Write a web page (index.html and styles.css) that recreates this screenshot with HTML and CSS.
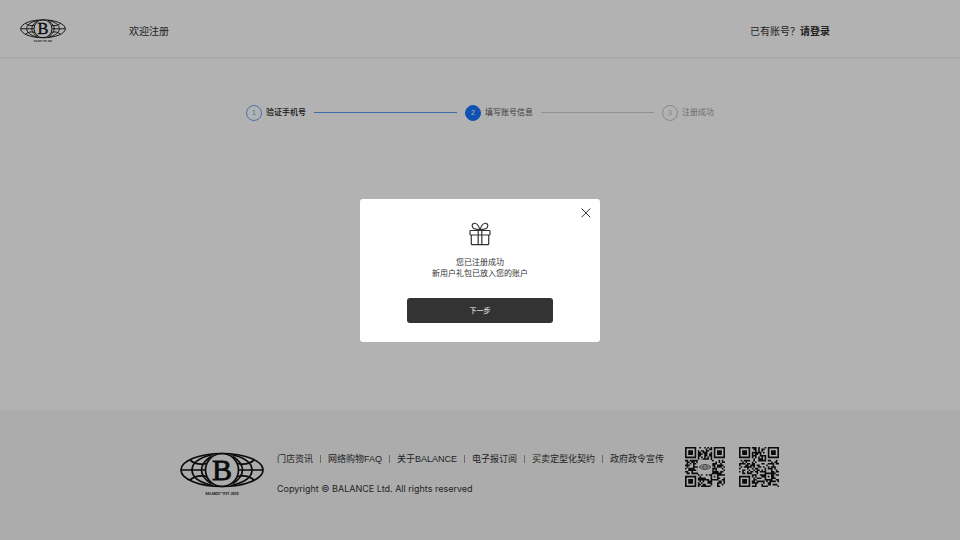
FILE: index.html
```html
<!DOCTYPE html>
<html lang="zh-CN">
<head>
<meta charset="utf-8">
<meta name="viewport" content="width=device-width, initial-scale=1">
<title>欢迎注册</title>
<link rel="stylesheet" href="styles.css">
</head>
<body>
<div class="page">
  <header class="header">
    <svg class="header-logo" viewBox="0 0 84 46" role="img" aria-label="BALANCE">
      <g class="globe-lines">
        <ellipse cx="42" cy="18" rx="41" ry="16.5"/>
        <circle cx="42" cy="18" r="16.5"/>
        <path d="M1 18H25.500M58.500 18H83"/>
        <path d="M33 2.500C17 6 12 12 12 18S17 30 33 33.500M51 2.500C67 6 72 12 72 18S67 30 51 33.500"/>
        <path d="M31 4.500C24 9 21.500 13 21.500 18S24 27 31 31.500M53 4.500C60 9 62.500 13 62.500 18S60 27 53 31.500"/>
        <path d="M10 8C15 12.500 20 13 27 11.500M74 8C69 12.500 64 13 57 11.500M10 28C15 23.500 20 23 27 24.500M74 28C69 23.500 64 23 57 24.500"/>
      </g>
      <text class="globe-letter" x="42" y="28" text-anchor="middle">B</text>
      <text class="globe-caption" x="42" y="43" text-anchor="middle">BALANCE ™ EST. 2020</text>
    </svg>
    <h1 class="header-title">欢迎注册</h1>
    <p class="header-login">已有账号？<a href="#login">请登录</a></p>
  </header>

  <main class="main">
    <ol class="steps">
      <li class="step step-done"><span class="step-number">1</span><span>验证手机号</span></li>
      <li class="step step-active"><span class="step-number">2</span><span>填写账号信息</span></li>
      <li class="step step-waiting"><span class="step-number">3</span><span>注册成功</span></li>
    </ol>
  </main>

  <footer class="footer">
    <svg class="footer-logo" viewBox="0 0 84 46" role="img" aria-label="BALANCE">
      <g class="globe-lines">
        <ellipse cx="42" cy="18" rx="41" ry="16.5"/>
        <circle cx="42" cy="18" r="16.5"/>
        <path d="M1 18H25.500M58.500 18H83"/>
        <path d="M33 2.500C17 6 12 12 12 18S17 30 33 33.500M51 2.500C67 6 72 12 72 18S67 30 51 33.500"/>
        <path d="M31 4.500C24 9 21.500 13 21.500 18S24 27 31 31.500M53 4.500C60 9 62.500 13 62.500 18S60 27 53 31.500"/>
        <path d="M10 8C15 12.500 20 13 27 11.500M74 8C69 12.500 64 13 57 11.500M10 28C15 23.500 20 23 27 24.500M74 28C69 23.500 64 23 57 24.500"/>
      </g>
      <text class="globe-letter" x="42" y="28" text-anchor="middle">B</text>
      <text class="globe-caption" x="42" y="43" text-anchor="middle">BALANCE ™ EST. 2020</text>
    </svg>
    <div class="footer-info">
      <nav class="footer-links">
        <a href="#stores">门店资讯</a>
        <a href="#faq">网络购物FAQ</a>
        <a href="#about">关于BALANCE</a>
        <a href="#news">电子报订阅</a>
        <a href="#terms">买卖定型化契约</a>
        <a href="#policy">政府政令宣传</a>
      </nav>
      <p class="copyright">Copyright © BALANCE Ltd. All rights reserved</p>
    </div>
    <div class="codes">
      <svg class="code" viewBox="0 0 25 25" data-seed="7">
        <path class="code-cells"/>
        <rect class="code-plate" x="8" y="8" width="9" height="9" rx="1"/>
        <g class="code-mark"><ellipse cx="12.500" cy="12.500" rx="3.500" ry="1.500"/><circle cx="12.500" cy="12.500" r="1.400"/><path d="M9 12.500h7"/></g>
      </svg>
      <svg class="code" viewBox="0 0 25 25" data-seed="23"><path class="code-cells"/></svg>
    </div>
  </footer>
</div>

<div class="overlay">
  <section class="modal" role="dialog" aria-modal="true" aria-labelledby="modal-message">
    <button class="modal-close" type="button" aria-label="关闭">
      <svg viewBox="0 0 10 10"><path d="M.5.5l8.800 8.800M9.300.5L.5 9.300"/></svg>
    </button>
    <svg class="gift" viewBox="0 0 22 24" aria-hidden="true">
      <rect x="1" y="8.500" width="20" height="4.500" rx=".8"/>
      <path d="M2.300 13v9q0 .7.7.7h16q.7 0 .7-.7v-9M9.200 8.500v14.200M12.800 8.500v14.200"/>
      <path d="M11 7.500C9.500 3 7 1 5 1.300 3 1.600 2.700 4 3.900 5.600 5 7 7.500 7.600 11 7.500C12.500 3 15 1 17 1.300c2 .3 2.300 2.700 1.100 4.300C17 7 14.500 7.600 11 7.500"/>
    </svg>
    <p class="modal-message" id="modal-message">您已注册成功<br>新用户礼包已放入您的账户</p>
    <button class="modal-next" type="button">下一步</button>
  </section>
</div>
<script src="codes.js"></script>
</body>
</html>
```
FILE: styles.css
```css
* {
  box-sizing: border-box;
}

body,
h1,
p,
ol {
  margin: 0;
  padding: 0;
}

body {
  background: #fff;
  color: #333;
  font-family: "Liberation Sans", "Noto Sans CJK SC", sans-serif;
  font-size: 9px;
}

a {
  color: inherit;
  text-decoration: none;
}

.globe-lines {
  fill: none;
  stroke: #111;
  stroke-width: 1.7;
}

.globe-letter {
  fill: #111;
  stroke: #111;
  stroke-width: 0.8;
  font: 30px "Liberation Serif", serif;
}

.globe-caption {
  fill: #111;
  font: bold 3px Inter, sans-serif;
}

.page {
  display: flex;
  flex-direction: column;
  min-height: 100vh;
}

.header {
  display: flex;
  align-items: center;
  padding: 19px 130px 13px 20px;
  box-shadow: 0 1px 2px rgba(0, 0, 0, 0.08);
  font-size: 10px;
  line-height: 16px;
}

.header-logo {
  width: 46px;
  height: 25px;
}

.header-title {
  margin-left: 63px;
  font-size: 10px;
  font-weight: 400;
}

.header-login {
  margin-left: auto;
}

.header-login a {
  font-weight: 700;
}

.main {
  flex: 1;
  padding: 47px 16px;
}

.steps {
  display: grid;
  grid-template-columns: 211fr 189fr auto;
  gap: 8px;
  max-width: 468px;
  margin: 0 auto;
  list-style: none;
  font-size: 8px;
  line-height: 17px;
}

.step {
  display: flex;
  align-items: center;
  gap: 4px;
  white-space: nowrap;
}

.step:not(:last-child)::after {
  content: "";
  flex: 1;
  height: 1px;
  margin-left: 4px;
  background: #d0d0d0;
}

.step-number {
  display: flex;
  align-items: center;
  justify-content: center;
  width: 16px;
  height: 16px;
  border: 1px solid currentColor;
  border-radius: 50%;
  font-size: 7px;
  font-weight: 400;
}

.step-done {
  color: #1a1a1a;
  font-weight: 500;
}

.step-done .step-number {
  color: #6ba3f8;
}

.step-done:not(:last-child)::after {
  background: #5b98f2;
}

.step-active {
  color: #555;
}

.step-active .step-number {
  border-color: #1677ff;
  background: #1677ff;
  color: #fff;
}

.step-waiting {
  color: #999;
}

.step-waiting .step-number {
  color: #c4c4c4;
}

.footer {
  display: flex;
  justify-content: center;
  padding: 37px 17px 42px 16px;
  background: #f6f6f6;
}

.footer-logo {
  width: 84px;
  height: 46px;
  margin-top: 5px;
}

.footer-info {
  margin: 5px 21px 0 13px;
}

.footer-links {
  display: flex;
  line-height: 14px;
}

.footer-links a {
  display: flex;
  align-items: center;
  white-space: nowrap;
}

.footer-links a + a::before {
  content: "";
  width: 1px;
  height: 8px;
  margin: 0 7px;
  background: #999;
}

.copyright {
  margin-top: 16px;
  font-family: Inter, sans-serif;
  line-height: 14px;
}

.codes {
  display: flex;
  gap: 14px;
}

.code {
  width: 40px;
  height: 40px;
}

.code-cells {
  fill: #111;
}

.code-plate {
  fill: #f6f6f6;
}

.code-mark {
  fill: none;
  stroke: #333;
  stroke-width: 0.4;
}

.overlay {
  position: fixed;
  inset: 0;
  display: flex;
  align-items: center;
  justify-content: center;
  background: rgba(0, 0, 0, 0.3);
}

.modal {
  position: relative;
  display: flex;
  flex-direction: column;
  align-items: center;
  padding: 23px 47px 19px;
  border-radius: 3px;
  background: #fff;
}

.modal-close {
  position: absolute;
  top: 9px;
  right: 9px;
  display: flex;
  padding: 0;
  border: 0;
  background: none;
  cursor: pointer;
}

.modal-close svg {
  width: 10px;
  height: 10px;
  stroke: #333;
  stroke-width: 1;
}

.gift {
  width: 22px;
  height: 24px;
  fill: none;
  stroke: #333;
  stroke-width: 1.2;
}

.modal-message {
  margin: 11px 0 19px;
  font-size: 8px;
  line-height: 11px;
  text-align: center;
}

.modal-next {
  width: 146px;
  height: 25px;
  padding: 0;
  border: 0;
  border-radius: 3px;
  background: #333;
  color: #fff;
  font-family: inherit;
  font-size: 7px;
  cursor: pointer;
}
```
FILE: codes.js
```js
// Fills each code with three finder squares, one alignment square and data cells.
const SIZE = 25;

function ring(x, y, cx, cy) {
  return Math.max(Math.abs(x - cx), Math.abs(y - cy));
}

function isDark(x, y, random) {
  const noise = random() < 0.52;
  for (const [cx, cy] of [[3, 3], [SIZE - 4, 3], [3, SIZE - 4]]) {
    const r = ring(x, y, cx, cy);
    if (r <= 4) return r !== 2 && r !== 4;
  }
  const r = ring(x, y, 18, 18);
  if (r <= 2) return r !== 1;
  if (x === 6 || y === 6) return (x + y) % 2 === 0;
  return noise;
}

document.querySelectorAll(".code").forEach((code) => {
  let state = Number(code.dataset.seed);
  const random = () => {
    state = (state * 48271) % 2147483647;
    return state / 2147483647;
  };
  let d = "";
  for (let y = 0; y < SIZE; y++) {
    for (let x = 0; x < SIZE; x++) {
      if (isDark(x, y, random)) d += `M${x} ${y}h1v1h-1z`;
    }
  }
  code.querySelector(".code-cells").setAttribute("d", d);
});
```
